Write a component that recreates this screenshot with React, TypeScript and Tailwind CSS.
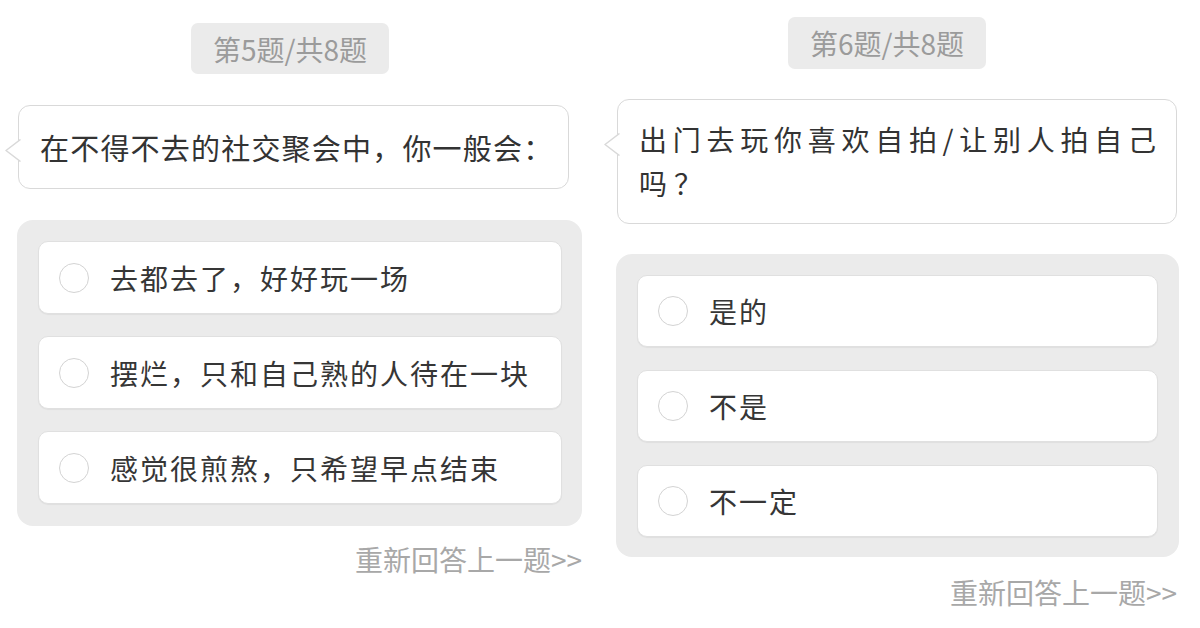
import React from "react";

const FONT = { fontFamily: '"Noto Sans CJK SC", "Noto Sans", sans-serif' };

function Tail() {
  return (
    <svg
      className="absolute left-[-14px] top-[33px]"
      width="17"
      height="23"
      viewBox="0 0 17 23"
    >
      <path d="M15.5 0.5 L1 11.5 L15.5 22.5 L17 22.5 L17 0.5 Z" fill="#ffffff" />
      <path
        d="M15.5 0.5 L1 11.5 L15.5 22.5"
        fill="none"
        stroke="#d9d9d9"
        strokeWidth="1.5"
        strokeLinejoin="round"
      />
    </svg>
  );
}

function Option({ text, h }: { text: string; h: string }) {
  return (
    <div
      className={`${h} flex items-center gap-[21px] rounded-[10px] border border-[#e0e0e0] bg-white pl-[20px] shadow-[0_1px_1px_rgba(0,0,0,0.05)]`}
    >
      <div className="h-[30px] w-[30px] shrink-0 rounded-full border-[1.5px] border-[#d3d3d3] bg-white" />
      <span className="text-[28px] leading-none tracking-[2px] text-[#363636]">
        {text}
      </span>
    </div>
  );
}

export default function App() {
  return (
    <div className="flex h-[628px] w-[1200px] overflow-hidden bg-white" style={FONT}>
      {/* Left column */}
      <div className="flex w-[600px] flex-col pt-[23px]">
        <div className="ml-[191px] flex h-[51px] w-[198px] items-center justify-center rounded-[7px] bg-[#ebebeb] text-[28px] text-[#9b9b9b]">
          第5题/共8题
        </div>
        <div className="relative ml-[18px] mt-[31px] flex h-[84px] w-[551px] items-center rounded-[12px] border-[1.5px] border-[#d9d9d9] bg-white pl-[21px]">
          <Tail />
          <span className="text-[29px] leading-[44px] tracking-[1.2px] text-[#333333]">
            在不得不去的社交聚会中，你一般会：
          </span>
        </div>
        <div className="ml-[17px] mt-[31px] flex w-[565px] flex-col gap-[22px] rounded-[16px] bg-[#ebebeb] pb-[22px] pl-[21px] pr-[20px] pt-[21px]">
          <Option h="h-[73px]" text="去都去了，好好玩一场" />
          <Option h="h-[73px]" text="摆烂，只和自己熟的人待在一块" />
          <Option h="h-[73px]" text="感觉很煎熬，只希望早点结束" />
        </div>
        <div className="mt-[15px] w-[582px] text-right text-[28px] leading-[36px] text-[#a8a8a8]">
          重新回答上一题&gt;&gt;
        </div>
      </div>

      {/* Right column */}
      <div className="flex w-[600px] flex-col pt-[17px]">
        <div className="ml-[188px] flex h-[52px] w-[198px] items-center justify-center rounded-[7px] bg-[#ebebeb] text-[28px] text-[#9b9b9b]">
          第6题/共8题
        </div>
        <div className="relative ml-[17px] mt-[30px] h-[125px] w-[560px] rounded-[12px] border-[1.5px] border-[#d9d9d9] bg-white pl-[21px] pr-[20px] pt-[17px]">
          <Tail />
          <p className="text-justify text-[28px] leading-[44px] text-[#333333] [text-align-last:justify]">
            出门去玩你喜欢自拍/让别人拍自己
          </p>
          <p className="text-[28px] leading-[44px] tracking-[7px] text-[#333333]">
            吗？
          </p>
        </div>
        <div className="ml-[16px] mt-[30px] flex w-[563px] flex-col gap-[23px] rounded-[16px] bg-[#ebebeb] pb-[20px] pl-[21px] pr-[21px] pt-[21px]">
          <Option h="h-[72px]" text="是的" />
          <Option h="h-[72px]" text="不是" />
          <Option h="h-[72px]" text="不一定" />
        </div>
        <div className="mt-[17px] w-[577px] text-right text-[28px] leading-[36px] text-[#a8a8a8]">
          重新回答上一题&gt;&gt;
        </div>
      </div>
    </div>
  );
}
